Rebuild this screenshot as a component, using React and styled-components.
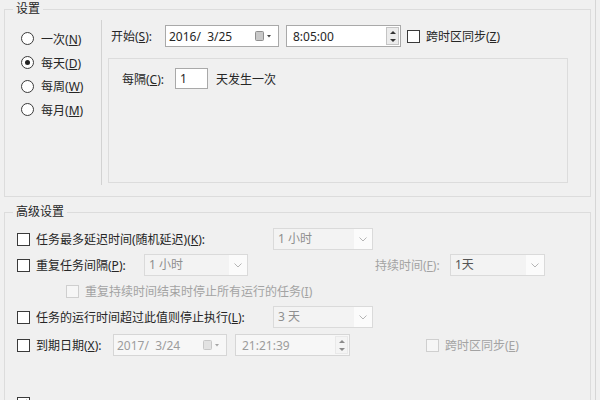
import React from 'react'
import styled, { createGlobalStyle } from 'styled-components'

const GlobalStyle = createGlobalStyle`
  html, body {
    margin: 0;
    padding: 0;
    background: #f0f0f0;
  }
  body {
    font-family: "Noto Sans", "Noto Sans CJK SC", sans-serif;
    font-size: 12px;
    color: #262626;
    overflow: hidden;
  }
`

const Page = styled.div`
  width: 596px;
  height: 400px;
  box-sizing: border-box;
  padding: 0 4px;
  border-right: 1px solid #d6d6d6;
  overflow: hidden;
`

const Group = styled.fieldset`
  margin: ${p => p.$top || 0}px 0 0;
  padding: 0;
  border: 1px solid #dcdcdc;
  height: ${p => p.$height}px;
  box-sizing: border-box;
  min-width: 0;
`

const Legend = styled.legend`
  margin-left: 8px;
  padding: 0 3px;
  line-height: 18px;
  color: #262626;
`

const SettingsBody = styled.div`
  display: flex;
  height: 178px;
`

const RadioColumn = styled.div`
  width: 96px;
  box-sizing: border-box;
  padding: 9px 0 0 16px;
  display: flex;
  flex-direction: column;
`

const RadioRow = styled.label`
  display: flex;
  align-items: center;
  height: 23.7px;
  gap: 7px;
  white-space: nowrap;
`

const RadioDot = styled.span`
  width: 13px;
  height: 13px;
  box-sizing: border-box;
  border: 1px solid #3a3a3a;
  border-radius: 50%;
  background: #fff;
  display: flex;
  align-items: center;
  justify-content: center;
  &::after {
    content: '';
    width: 5px;
    height: 5px;
    border-radius: 50%;
    background: ${p => (p.$checked ? '#222' : 'transparent')};
  }
`

const Divider = styled.div`
  width: 1px;
  height: 165px;
  margin-top: 2px;
  background: #d2d2d2;
`

const RightPane = styled.div`
  display: flex;
  flex-direction: column;
`

const StartRow = styled.div`
  display: flex;
  align-items: center;
  height: 22px;
  margin: 7px 0 0 9px;
`

const Label = styled.span`
  width: ${p => (p.$width ? `${p.$width}px` : 'auto')};
  flex: none;
  white-space: nowrap;
  color: ${p => (p.$disabled ? '#a3a3a3' : '#262626')};
  margin-left: ${p => p.$ml || 0}px;
`

const Field = styled.div`
  width: ${p => p.$width}px;
  height: 22px;
  box-sizing: border-box;
  flex: none;
  display: flex;
  align-items: center;
  margin-left: ${p => p.$ml || 0}px;
  border: 1px solid ${p => (p.$disabled ? '#d6d6d6' : '#a9a9a9')};
  background: ${p => (p.$disabled ? '#f7f7f7' : '#fff')};
  color: ${p => (p.$disabled ? '#9c9c9c' : '#262626')};
`

const FieldText = styled.span`
  flex: 1;
  padding-left: ${p => p.$pl || 3}px;
  white-space: pre;
`

const CalendarIcon = styled.svg`
  width: 18px;
  height: 12px;
  margin-right: 5px;
  opacity: ${p => (p.$disabled ? 0.45 : 1)};
`

const Spinner = styled.div`
  width: 13px;
  height: 18px;
  margin-right: 1px;
  box-sizing: border-box;
  border: 1px solid ${p => (p.$disabled ? '#dedede' : '#c4c4c4')};
  background: ${p => (p.$disabled ? '#f2f2f2' : '#ececec')};
  display: flex;
  flex-direction: column;
  align-items: center;
  justify-content: space-around;
  opacity: ${p => (p.$disabled ? 0.55 : 1)};
`

const Tri = styled.span`
  width: 0;
  height: 0;
  border-left: 3px solid transparent;
  border-right: 3px solid transparent;
  ${p =>
    p.$down
      ? 'border-top: 3px solid #333;'
      : 'border-bottom: 3px solid #333;'}
`

const Check = styled.span`
  width: 13px;
  height: 13px;
  box-sizing: border-box;
  flex: none;
  border: 1px solid ${p => (p.$disabled ? '#cfcfcf' : '#3a3a3a')};
  background: ${p => (p.$disabled ? '#f6f6f6' : '#fff')};
  margin-left: ${p => p.$ml || 0}px;
  margin-right: 6px;
  display: flex;
  align-items: center;
  justify-content: center;
`

const Panel = styled.div`
  width: 460px;
  height: 125px;
  margin: 11px 0 0 6px;
  box-sizing: border-box;
  border: 1px solid #dcdcdc;
  padding: 9px 0 0 13px;
`

const IntervalRow = styled.div`
  display: flex;
  align-items: center;
  height: 21px;
`

const NumBox = styled.div`
  width: 33px;
  height: 21px;
  box-sizing: border-box;
  border: 1px solid #a9a9a9;
  background: #fff;
  padding-left: 4px;
  line-height: 19px;
`

const AdvancedBody = styled.div`
  padding: 7px 0 0 12px;
  display: flex;
  flex-direction: column;
`

const Row = styled.div`
  display: flex;
  align-items: center;
  height: 22px;
  margin-top: ${p => p.$mt || 0}px;
`

const Combo = styled.div`
  width: ${p => p.$width}px;
  height: 22px;
  box-sizing: border-box;
  flex: none;
  display: flex;
  margin-left: ${p => p.$ml || 0}px;
  border: 1px solid #dadada;
  background: #f3f3f3;
  color: ${p => p.$color || '#8e8e8e'};
`

const ComboText = styled.span`
  flex: 1;
  padding-left: 4px;
  line-height: 20px;
  white-space: pre;
`

const ComboArrow = styled.span`
  width: 18px;
  background: #fbfbfb;
  display: flex;
  align-items: center;
  justify-content: center;
`

const U = styled.u`
  text-underline-offset: 1px;
  text-decoration-thickness: 1px;
`

const Chevron = () => (
  <svg width="8" height="5" viewBox="0 0 8 5">
    <path d="M0.5 0.5 L4 4 L7.5 0.5" fill="none" stroke="#b5b5b5" strokeWidth="1" />
  </svg>
)

const Calendar = ({ disabled }) => (
  <CalendarIcon $disabled={disabled} viewBox="0 0 18 12">
    <rect x="0.5" y="1.5" width="8" height="9" rx="1" fill="#c9c9c9" stroke="#8f8f8f" />
    <path d="M12 5 L16 5 L14 7.5 Z" fill="#444" />
  </CalendarIcon>
)

const DateField = ({ value, width, ml, disabled }) => (
  <Field $width={width} $ml={ml} $disabled={disabled}>
    <FieldText>{value}</FieldText>
    <Calendar disabled={disabled} />
  </Field>
)

const TimeField = ({ value, width, ml, disabled }) => (
  <Field $width={width} $ml={ml} $disabled={disabled}>
    <FieldText $pl={6}>{value}</FieldText>
    <Spinner $disabled={disabled}>
      <Tri />
      <Tri $down />
    </Spinner>
  </Field>
)

const Radio = ({ checked, text, hot }) => (
  <RadioRow>
    <RadioDot $checked={checked} />
    <span>
      {text}(<U>{hot}</U>)
    </span>
  </RadioRow>
)

const CheckMark = () => (
  <svg width="9" height="8" viewBox="0 0 9 8">
    <path d="M1 4 L3.5 6.5 L8 1" fill="none" stroke="#222" strokeWidth="1.4" />
  </svg>
)

const Dropdown = ({ value, width, ml, color }) => (
  <Combo $width={width} $ml={ml} $color={color}>
    <ComboText>{value}</ComboText>
    <ComboArrow>
      <Chevron />
    </ComboArrow>
  </Combo>
)

export default function App() {
  return (
    <>
      <GlobalStyle />
      <Page>
        <Group $height={197}>
          <Legend>设置</Legend>
          <SettingsBody>
            <RadioColumn>
              <Radio text="一次" hot="N" />
              <Radio text="每天" hot="D" checked />
              <Radio text="每周" hot="W" />
              <Radio text="每月" hot="M" />
            </RadioColumn>
            <Divider />
            <RightPane>
              <StartRow>
                <Label $width={54}>
                  开始(<U>S</U>):
                </Label>
                <DateField value="2016/  3/25" width={114} />
                <TimeField value="8:05:00" width={115} ml={7} />
                <Check $ml={6} />
                <Label>
                  跨时区同步(<U>Z</U>)
                </Label>
              </StartRow>
              <Panel>
                <IntervalRow>
                  <Label $width={53}>
                    每隔(<U>C</U>):
                  </Label>
                  <NumBox>1</NumBox>
                  <Label $ml={8}>天发生一次</Label>
                </IntervalRow>
              </Panel>
            </RightPane>
          </SettingsBody>
        </Group>

        <Group $top={6} $height={230}>
          <Legend>高级设置</Legend>
          <AdvancedBody>
            <Row>
              <Check />
              <Label $width={237}>
                任务最多延迟时间(随机延迟)(<U>K</U>):
              </Label>
              <Dropdown value="1 小时" width={100} />
            </Row>
            <Row $mt={4}>
              <Check />
              <Label $width={108}>
                重复任务间隔(<U>P</U>):
              </Label>
              <Dropdown value="1 小时" width={104} />
              <Label $width={75} $ml={127} $disabled>
                持续时间(<U>F</U>):
              </Label>
              <Dropdown value="1天" width={95} color="#555" />
            </Row>
            <Row $mt={4}>
              <Check $ml={49} $disabled />
              <Label $disabled>
                重复持续时间结束时停止所有运行的任务(<U>I</U>)
              </Label>
            </Row>
            <Row $mt={4}>
              <Check />
              <Label $width={237}>
                任务的运行时间超过此值则停止执行(<U>L</U>):
              </Label>
              <Dropdown value="3 天" width={100} />
            </Row>
            <Row $mt={6}>
              <Check />
              <Label $width={77}>
                到期日期(<U>X</U>):
              </Label>
              <DateField value="2017/  3/24" width={114} disabled />
              <TimeField value="21:21:39" width={115} ml={8} disabled />
              <Check $ml={76} $disabled />
              <Label $disabled>
                跨时区同步(<U>E</U>)
              </Label>
            </Row>
            <Row $mt={36}>
              <Check>
                <CheckMark />
              </Check>
            </Row>
          </AdvancedBody>
        </Group>
      </Page>
    </>
  )
}
